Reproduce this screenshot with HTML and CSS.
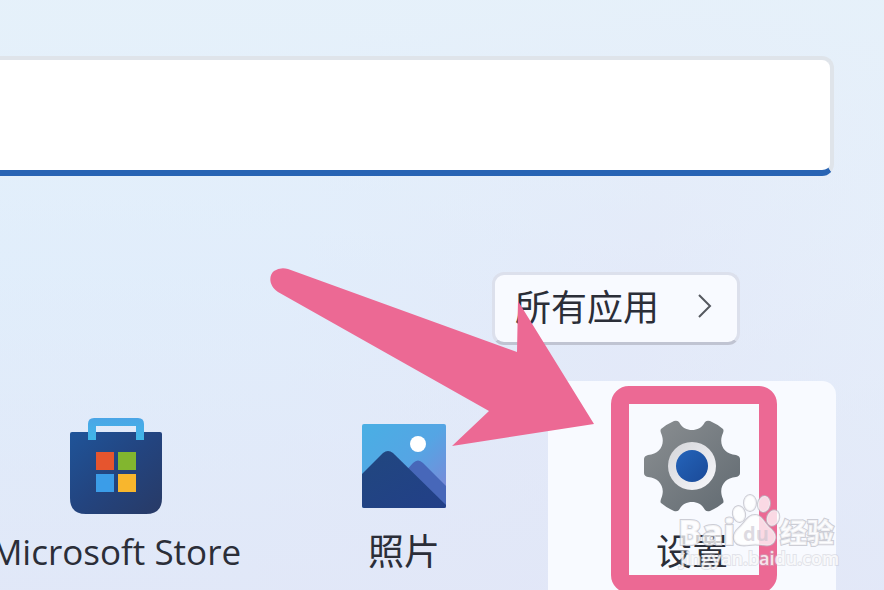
FILE: index.html
```html
<!DOCTYPE html>
<html lang="zh-CN">
<head>
  <meta charset="UTF-8">
  <title>开始菜单</title>
  <meta name="viewport" content="width=device-width, initial-scale=1">
  <link rel="stylesheet" href="styles.css">
</head>
<body>
  <main class="start-menu">
    <input type="search" class="search-box" aria-label="搜索">

    <div class="pinned-header">
      <button type="button" class="all-apps">
        <span>所有应用</span>
        <svg class="chevron" viewBox="0 0 16 24" aria-hidden="true">
          <path d="M2 1l11 11L2 23"/>
        </svg>
      </button>
    </div>

    <div class="app-grid">
      <a href="#store" class="app">
        <svg class="app-icon" viewBox="0 0 96 96" aria-hidden="true">
          <defs>
            <linearGradient id="bag" x1="0" y1="0" x2="1" y2="1">
              <stop offset="0" stop-color="#1f5499"/>
              <stop offset="0.5" stop-color="#23447f"/>
              <stop offset="1" stop-color="#283a66"/>
            </linearGradient>
            <linearGradient id="handle" x1="0" y1="0" x2="0" y2="1">
              <stop offset="0" stop-color="#4ba5e6"/>
              <stop offset="1" stop-color="#3fb7e8"/>
            </linearGradient>
          </defs>
          <path fill="url(#bag)" d="M4 12h88q2 0 2 2v64q0 16-16 16H18Q2 94 2 78V14q0-2 2-2z"/>
          <path fill="url(#handle)" d="M20 20V4q0-6 6-6h44q6 0 6 6v16h-8V6H28v14z"/>
          <path fill="#e6552e" d="M28 32h18v18H28z"/>
          <path fill="#82b62f" d="M50 32h18v18H50z"/>
          <path fill="#3b9de8" d="M28 54h18v18H28z"/>
          <path fill="#f8b62d" d="M50 54h18v18H50z"/>
        </svg>
        <span class="app-name latin">Microsoft Store</span>
      </a>

      <a href="#photos" class="app">
        <svg class="app-icon" viewBox="0 0 96 96" aria-hidden="true">
          <defs>
            <linearGradient id="sky" x1="0" y1="0" x2="1" y2="1">
              <stop offset="0" stop-color="#49afe4"/>
              <stop offset="0.5" stop-color="#55a5e4"/>
              <stop offset="0.8" stop-color="#7190db"/>
              <stop offset="1" stop-color="#8c83cf"/>
            </linearGradient>
            <linearGradient id="hill" x1="0" y1="0" x2="1" y2="1">
              <stop offset="0" stop-color="#21477f"/>
              <stop offset="1" stop-color="#223f88"/>
            </linearGradient>
            <clipPath id="frame"><rect x="6" y="4" width="84" height="84" rx="2"/></clipPath>
          </defs>
          <g clip-path="url(#frame)">
            <path fill="url(#sky)" d="M6 4h84v84H6z"/>
            <path fill="#4767b9" d="M40 62l17-19q5-5 10 0l26 26v20H60z"/>
            <path fill="url(#hill)" d="M4 56l23-23q5-4 10 0l55 54v3H4z"/>
            <circle cx="62" cy="24" r="8" fill="#fff"/>
          </g>
        </svg>
        <span class="app-name">照片</span>
      </a>

      <a href="#settings" class="app active">
        <svg class="app-icon" viewBox="0 0 96 96" aria-hidden="true">
          <defs>
            <linearGradient id="gear" x1="0" y1="0" x2="1" y2="1">
              <stop offset="0" stop-color="#8b8f92"/>
              <stop offset="1" stop-color="#616a71"/>
            </linearGradient>
            <linearGradient id="ring" x1="0" y1="0" x2="1" y2="1">
              <stop offset="0" stop-color="#d4d5d9"/>
              <stop offset="1" stop-color="#f8f8fc"/>
            </linearGradient>
            <linearGradient id="core" x1="0" y1="0" x2="1" y2="1">
              <stop offset="0" stop-color="#2464ba"/>
              <stop offset="1" stop-color="#1b4a98"/>
            </linearGradient>
          </defs>
          <path fill="url(#gear)" d="M30 1q3-1 5 1c3 6 8 8 13 8s10-2 13-8q2-2 5-1q7 3 13 8q1 1 0 4c-5 11 1 21 13 22q4 1 4 4v14q0 3-4 4c-12 1-18 11-13 22q1 3 0 4q-6 5-13 8q-3 1-5-1c-3-6-8-8-13-8s-10 2-13 8q-2 2-5 1q-7-3-13-8q-1-1 0-4c5-11-1-21-13-22q-4-1-4-4V39q0-3 4-4c12-1 18-11 13-22q-1-3 0-4q6-5 13-8z"/>
          <circle cx="48" cy="46" r="24" fill="url(#ring)"/>
          <circle cx="48" cy="46" r="16" fill="url(#core)"/>
        </svg>
        <span class="app-name">设置</span>
        <span class="highlight"></span>
      </a>
    </div>

    <!-- 箭头标注 -->
    <svg class="arrow" viewBox="0 0 324 180" aria-hidden="true">
      <path d="M18 1L247 84L248 33L324 156L182 178L219 143L8 24C-2 17-1 7 4 3Q10-1 18 1z"/>
    </svg>

    <!-- 水印 -->
    <svg class="watermark" viewBox="0 0 164 80" role="img" aria-label="百度经验">
      <text class="mark-text" x="2" y="53" font-size="35">Bai</text>
      <g class="paw">
        <ellipse cx="63" cy="22" rx="6" ry="8" transform="rotate(-12 63 22)"/>
        <ellipse cx="74" cy="11" rx="6" ry="8"/>
        <ellipse cx="88" cy="12" rx="6" ry="8" transform="rotate(10 88 12)"/>
        <ellipse cx="97" cy="26" rx="6" ry="8" transform="rotate(20 97 26)"/>
        <path d="M79 23c7 0 9 7 14 12 5 4 8 8 6 13-2 6-8 6-13 5q-7-1-13 0c-7 1-14 0-15-6-1-6 3-9 7-13 5-5 7-11 14-11z"/>
      </g>
      <text class="mark-du" x="67" y="49" font-size="20">du</text>
      <text class="mark-cjk" x="104" y="51" font-size="27">经验</text>
      <text class="mark-url" x="4" y="73" font-size="18">jingyan.baidu.com</text>
    </svg>
  </main>
</body>
</html>
```
FILE: styles.css
```css
* {
  box-sizing: border-box;
}
body {
  margin: 0;
  min-height: 100vh;
  overflow: hidden;
  font-family: 'Open Sans', 'Noto Sans CJK SC', sans-serif;
  color: #2b2e38;
  background: linear-gradient(100deg, #e0eefb 0%, #e1edfb 35%, #e4e9f8 70%, #e7effa 100%);
}
.start-menu {
  position: relative;
  display: flex;
  flex-direction: column;
  min-height: 100vh;
  padding: 56px 48px 0 0;
  background: linear-gradient(180deg, rgba(230, 241, 250, 0.9) 0%, rgba(226, 237, 251, 0.3) 45%, rgba(225, 230, 247, 0.8) 100%);
}

/* 搜索框 */
.search-box {
  height: 120px;
  margin: 0 2px 0 -28px;
  padding: 0 40px;
  border: 4px solid #dfe4ea;
  border-bottom: 6px solid #2864b4;
  border-radius: 12px;
  background-color: #fff;
  font-size: 36px;
  outline: none;
}

.pinned-header {
  display: flex;
  justify-content: flex-end;
  margin-top: 96px;
  padding-right: 96px;
}
.all-apps {
  display: flex;
  align-items: center;
  justify-content: space-between;
  width: 248px;
  height: 73px;
  padding: 0 24px 6px 20px;
  border: 3px solid #dce0ec;
  border-bottom-color: #c0c4d2;
  border-radius: 12px;
  background-color: #f8faff;
  font-family: inherit;
  font-size: 36px;
  color: #2b2e38;
  cursor: pointer;
}
.chevron {
  width: 16px;
  height: 24px;
  fill: none;
  stroke: #55585f;
  stroke-width: 2;
}

/* 已固定的应用 */
.app-grid {
  display: grid;
  grid-template-columns: repeat(3, 1fr);
  margin: 36px 0 0 -28px;
}
.app {
  position: relative;
  display: flex;
  flex-direction: column;
  align-items: center;
  height: 224px;
  padding-top: 39px;
  border-radius: 14px;
  color: inherit;
  text-decoration: none;
}
.app.active {
  background-color: #f8faff;
}
.app-icon {
  width: 96px;
  height: 96px;
  overflow: visible;
}
.app-name {
  margin-top: 12px;
  font-size: 36px;
  line-height: 48px;
  white-space: nowrap;
}
.app-name.latin {
  font-size: 35px;
}

/* 标注 */
.highlight {
  position: absolute;
  top: 5px;
  left: 50%;
  width: 166px;
  height: 207px;
  margin-left: -81px;
  border: 18px solid #ec6994;
  border-radius: 18px;
}
.arrow {
  position: absolute;
  top: 268px;
  left: 270px;
  width: 324px;
  height: 180px;
  fill: #ec6994;
}
.watermark {
  position: absolute;
  top: 492px;
  right: 44px;
  width: 164px;
  height: 80px;
  font-family: 'Open Sans', 'Noto Sans CJK SC', sans-serif;
  fill: rgba(255, 255, 255, 0.75);
  stroke: rgba(185, 185, 195, 0.7);
  stroke-width: 2;
  paint-order: stroke;
}
.mark-text {
  font-weight: 800;
}
.mark-cjk {
  font-weight: 900;
}
.mark-du {
  font-weight: 700;
  fill: rgba(200, 195, 205, 0.6);
  stroke: none;
}
.mark-url {
  font-weight: 600;
  fill: rgba(255, 255, 255, 0.8);
  stroke: rgba(190, 190, 200, 0.4);
}
```
